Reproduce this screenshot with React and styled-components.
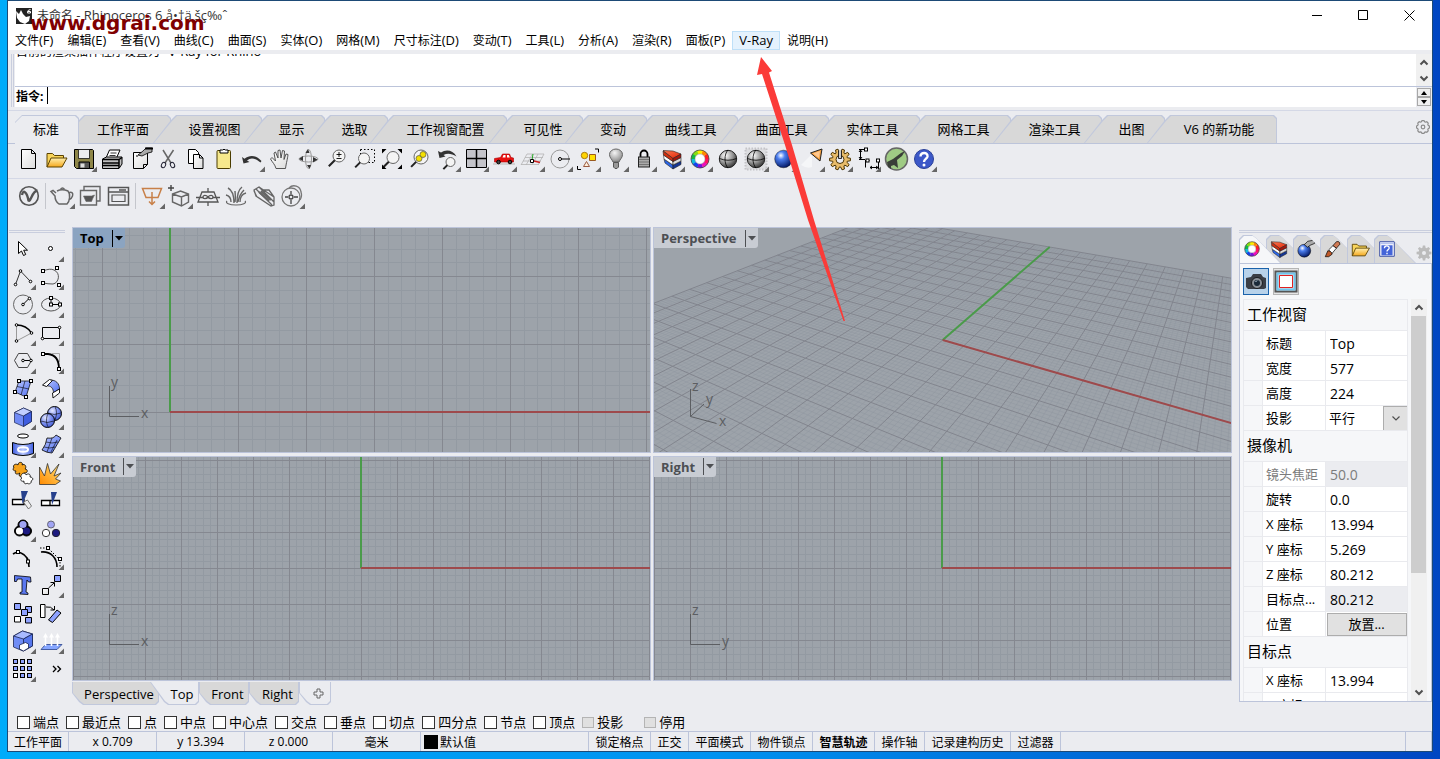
import styled, { createGlobalStyle, css } from "styled-components";

const GlobalStyle = createGlobalStyle`
	* {
		box-sizing: border-box;
	}

	body {
		margin: 0;
		font-family: "Open Sans", "Noto Sans CJK SC", sans-serif;
		font-size: 13px;
		color: #000000;
	}

	button,
	input,
	select {
		font: inherit;
		color: inherit;
	}

	button {
		padding: 0;
		border: 0;
		background: none;
	}
`;

const Desktop = styled.div`
	position: relative;
	height: 100vh;
	min-height: 700px;
	padding: 0 7px 7px;
	overflow: hidden;
	background: linear-gradient(90deg, #00acfa 0%, #0092f0 50%, #0046c2 100%);
`;

const Window = styled.div`
	display: flex;
	flex-direction: column;
	height: 100%;
	border: 1px solid #1d4a76;
	background-color: #ebecf0;
`;

const Latin = styled.span`
	font-size: 13px;
`;

const TitleBar = styled.header`
	position: relative;
	display: flex;
	align-items: center;
	gap: 5px;
	height: 29px;
	padding-left: 8px;
	font-size: 12px;
	line-height: 16px;
	color: #333333;
	background-color: #ffffff;
`;

const WindowButtons = styled.div`
	display: flex;
	margin-left: auto;

	button {
		width: 46px;
		height: 28px;
	}

	svg {
		display: block;
		margin: auto;
	}
`;

const Watermark = styled.strong`
	position: absolute;
	top: 10px;
	left: 22px;
	font-family: "DejaVu Sans", sans-serif;
	font-size: 20px;
	line-height: 24px;
	color: #800000;
`;

const MenuBar = styled.nav`
	display: flex;
	height: 20px;
	background-color: #ffffff;
`;

const MenuItem = styled.button`
	height: 19px;
	margin-top: 1px;
	padding: 0 6px;
	font-size: 12px;
	line-height: 17px;
	white-space: nowrap;
	border: 1px solid transparent;

	${(p) =>
		p.$hot &&
		css`
			border-color: #bfe0f8;
			background-color: #e5f2fd;
		`}
`;

const CommandArea = styled.section`
	display: grid;
	grid-template-columns: 1fr 16px;
	grid-template-rows: 32px 21px;
	margin: 4px 0 3px 3px;
	padding-left: 3px;
	border-left: 1px solid #c9cede;
	background: linear-gradient(90deg, #ebecf0 1px, #c9cede 1px, #c9cede 2px, #ebecf0 2px) no-repeat 0 0 / 3px 100%;
	padding-left: 3px;
`;

const History = styled.div`
	display: flex;
	align-items: flex-start;
	overflow: hidden;
	padding-left: 1px;
	background-color: #ffffff;
	font-size: 12px;

	p {
		margin: -11px 0 0;
		line-height: 16px;
	}
`;

const HistoryScroll = styled.div`
	display: flex;
	flex-direction: column;
	justify-content: space-around;
	align-items: center;
	background-color: #f0f0f0;

	button {
		width: 16px;
		height: 12px;
	}

	svg {
		display: block;
		margin: auto;
	}
`;

const Prompt = styled.div`
	display: flex;
	align-items: center;
	padding: 0 0 3px 1px;
	border-top: 1px solid #bcc4da;
	background-color: #ffffff;
	font-size: 12px;

	label {
		font-weight: 700;
	}

	input {
		flex: 1;
		height: 16px;
		border: 0;
		outline: 0;
		background: none;
	}
`;

const Caret = styled.span`
	width: 1px;
	height: 17px;
	margin-left: 4px;
	background-color: #000000;
`;

const Spinner = styled.div`
	display: flex;
	flex-direction: column;
	padding: 1px;
	border-top: 1px solid #bcc4da;

	button {
		flex: 1;
		width: 14px;
		line-height: 0;
		border: 1px solid #a8a8a8;
		background-color: #f0f0f0;
	}

	svg {
		display: block;
		margin: auto;
	}
`;

const TabStrip = styled.div`
	display: flex;
	height: 34px;
	padding: 4px 0 0 7px;
	border-top: 1px solid #d4d8e6;
	border-bottom: 1px solid #bcc4da;
`;

const slantedTab = "polygon(0 100%, 18px 5px, 23px 0, calc(100% - 3px) 0, 100% 3px, 100% 100%)";
const firstTab = "polygon(0 7px, 7px 0, calc(100% - 3px) 0, 100% 3px, 100% 100%, 0 100%)";

const ToolTab = styled.button`
	position: relative;
	z-index: 0;
	flex: none;
	width: ${(p) => p.$width + 18}px;
	height: 28px;
	margin-left: -18px;
	padding-left: 14px;
	line-height: 25px;
	background-color: #c1c8dc;
	clip-path: ${slantedTab};

	&::before {
		content: "";
		position: absolute;
		inset: 1px 1px 0 1px;
		z-index: -1;
		background-color: #d8d8d8;
		clip-path: ${slantedTab};
	}

	${(p) =>
		p.$active &&
		css`
			z-index: 1;
			width: 64px;
			height: 29px;
			margin: 0;
			padding: 0 2px 0 0;
			clip-path: ${firstTab};

			&::before {
				inset: 1px 1px 0 0;
				background-color: #ebecf0;
				clip-path: ${firstTab};
			}
		`}
`;

const StripOptions = styled.button`
	margin-left: auto;
	width: 16px;
	height: 24px;

	svg {
		display: block;
	}
`;

const ToolBar = styled.div`
	display: flex;
	align-items: flex-start;
	height: ${(p) => p.$height}px;
	padding: ${(p) => (p.$line ? 1 : 3)}px 6px 0;
	border-bottom: ${(p) => (p.$line ? "1px solid #d4d8e6" : "0")};
`;

const ToolButton = styled.button`
	width: 28px;
	height: 28px;
	flex: none;

	svg {
		display: block;
	}
`;

const Divider = styled.span`
	width: 1px;
	height: 26px;
	margin: 1px 2px 0 3px;
	background-color: #c4c6cc;
`;

const Main = styled.main`
	display: flex;
	flex: 1;
	min-height: 0;
`;

const SideTools = styled.aside`
	display: grid;
	grid-template-columns: 28px 28px;
	grid-auto-rows: 28px;
	align-content: start;
	flex: none;
	width: 56px;
	margin: 3px 7px 0 1px;
	padding-top: 2px;
	border-top: 3px double #c9cede;
`;

const Center = styled.section`
	display: flex;
	flex-direction: column;
	flex: 1;
	min-width: 0;
`;

const ViewportGrid = styled.div`
	display: grid;
	grid-template-columns: 1fr 1fr;
	grid-template-rows: 1fr 1fr;
	gap: 3px 2px;
	flex: 1;
	min-height: 0;
`;

const ViewportFrame = styled.div`
	position: relative;
	min-width: 0;
	min-height: 0;
	overflow: hidden;
	border: 1px solid #bcc4da;
	background-color: #9da3aa;

	> svg {
		position: absolute;
		left: 0;
		width: 100%;
		height: 100%;
	}
`;

const ViewportLabel = styled.button`
	position: absolute;
	top: 0;
	left: 0;
	display: flex;
	align-items: center;
	height: 20px;
	padding-left: 7px;
	font-weight: 700;
	line-height: 20px;
	color: ${(p) => (p.$active ? "#000000" : "#4d4f53")};
	background-color: ${(p) => (p.$active ? "#8ba4c1" : "#c8ccd3")};
	border-bottom-right-radius: 3px;

	span {
		width: 1px;
		height: 17px;
		margin-left: 8px;
		background-color: currentColor;
	}

	svg {
		margin: 0 2px;
	}
`;

const Gizmo = styled.svg`
	&& {
		top: auto;
		bottom: 24px;
		left: 28px;
		width: 60px;
		height: 60px;
		font-size: 14px;
		overflow: visible;
	}
`;

const ViewTabs = styled.div`
	display: flex;
	height: 23px;
	margin: 1px 0 3px;
`;

const viewTab =
	"polygon(0 0, 100% 0, 100% calc(100% - 3px), calc(100% - 3px) 100%, 11px 100%, 7px calc(100% - 3px), 0 11px)";
const currentViewTab =
	"polygon(0 0, 100% 0, 100% calc(100% - 3px), calc(100% - 3px) 100%, 18px 100%, 14px calc(100% - 3px))";

const ViewTab = styled.button`
	position: relative;
	z-index: 0;
	height: 23px;
	width: ${(p) => p.$width}px;
	margin-left: ${(p) => (p.$current ? -9 : 0)}px;
	padding-left: ${(p) => (p.$current ? 15 : 7)}px;
	line-height: 22px;
	background-color: #c1c8dc;
	clip-path: ${(p) => (p.$current ? currentViewTab : viewTab)};

	&::before {
		content: "";
		position: absolute;
		inset: 0 1px 1px 1px;
		z-index: -1;
		background-color: ${(p) => (p.$gray ? "#d8d8d8" : "#ebecf0")};
		clip-path: ${(p) => (p.$current ? currentViewTab : viewTab)};
	}

	svg {
		display: block;
		margin: auto;
	}
`;

const Panel = styled.aside`
	display: flex;
	flex-direction: column;
	flex: none;
	width: 193px;
	margin: 3px 0 6px 7px;
	border-top: 3px double #c9cede;
`;

const PanelTabs = styled.div`
	display: flex;
	align-items: flex-end;
	height: 30px;
`;

const panelTab = "polygon(0 4px, 4px 0, 13px 0, 17px 3px, 100% 100%, 0 100%)";

const PanelTab = styled.button`
	position: relative;
	z-index: ${(p) => (p.$active ? 1 : 0)};
	width: 42px;
	height: 28px;
	margin-right: -15px;
	background-color: #c1c8dc;
	clip-path: ${panelTab};

	&::before {
		content: "";
		position: absolute;
		inset: 1px 1px 0 1px;
		z-index: -1;
		background-color: ${(p) => (p.$active ? "#f6f7f9" : "#d8d8d8")};
		clip-path: ${panelTab};
	}

	svg {
		display: block;
		margin-left: 1px;
	}
`;

const PanelOptions = styled.button`
	width: 16px;
	height: 18px;
	margin-left: auto;
`;

const PanelBody = styled.div`
	display: flex;
	flex-direction: column;
	flex: 1;
	min-height: 0;
	padding: 4px 4px 0 3px;
	border: 1px solid #bcc4da;
	background-color: #f6f7f9;
`;

const PageButtons = styled.div`
	display: flex;
	gap: 4px;
	margin-bottom: 4px;
`;

const PageButton = styled.button`
	width: 26px;
	height: 27px;
	border: 1px solid ${(p) => (p.$active ? "#1a62ab" : "#b5b5b5")};
	background-color: ${(p) => (p.$active ? "#b8d2ea" : "#e5e5e5")};

	svg {
		display: block;
	}
`;

const PropsScroll = styled.div`
	display: flex;
	flex: 1;
	min-height: 0;
	overflow: hidden;
`;

const PropTable = styled.table`
	width: 165px;
	border-collapse: collapse;
	table-layout: fixed;
	align-self: flex-start;

	col:nth-child(1) {
		width: 19px;
	}

	col:nth-child(2) {
		width: 63px;
	}

	td,
	th {
		height: 25px;
		padding: 0;
		border: 1px solid #e9eaee;
		font-weight: 400;
		text-align: left;
		line-height: 20px;
		white-space: nowrap;
	}

	th[scope="rowgroup"] {
		height: 31px;
		padding: 0 0 2px 3px;
		font-size: 15px;
		background-color: #f6f7f9;
	}

	th[scope="row"] {
		padding-left: 3px;
		background-color: #ffffff;
	}
`;

const ValueCell = styled.td`
	background-color: ${(p) => (p.$gray ? "#ebecf0" : "#ffffff")};

	input {
		display: block;
		width: 100%;
		height: 24px;
		padding: 0 4px;
		border: 0;
		background: none;
		font-size: 14px;
	}

	button {
		display: block;
		width: 80px;
		height: 23px;
		margin: auto;
		border: 1px solid #adadad;
		background-color: #e1e1e1;
	}
`;

const Dim = styled.span`
	color: #7c7c7c;
`;

const SelectBox = styled.div`
	display: flex;

	select {
		flex: 1;
		min-width: 0;
		height: 24px;
		padding: 0 3px;
		border: 0;
		background: none;
		appearance: none;
	}

	span {
		display: grid;
		place-items: center;
		width: 24px;
		height: 24px;
		border-left: 1px solid #adadad;
		border-top: 1px solid #adadad;
		background-color: #e1e1e1;
	}
`;

const ScrollBar = styled.div`
	display: flex;
	flex-direction: column;
	width: 16px;
	margin-left: auto;
	background-color: #f0f0f0;

	button {
		height: 17px;
	}

	span {
		flex: 0 1 257px;
		width: 15px;
		background-color: #cdcdcd;
	}

	button:last-child {
		margin-top: auto;
	}

	svg {
		display: block;
		margin: auto;
	}
`;

const SnapBar = styled.div`
	display: flex;
	align-items: center;
	height: 23px;
	padding: 5px 0 0 9px;
`;

const Snap = styled.label`
	display: flex;
	align-items: center;
	gap: 3px;
	margin-right: ${(p) => (p.$off ? 21 : 7)}px;
	line-height: 18px;

	input {
		appearance: none;
		width: 13px;
		height: 13px;
		margin: 0;
		border: 1px solid #333333;
		background-color: #ffffff;
	}

	input:disabled {
		width: 12px;
		height: 11px;
		border-color: #b4b4b4;
		background-color: #e0e0e0;
	}
`;

const StatusBar = styled.footer`
	display: flex;
	height: 20px;
	border-top: 1px solid #bcc4da;
	font-size: 12px;
`;

const StatusCell = styled.button`
	display: flex;
	align-items: center;
	justify-content: ${(p) => (p.$left ? "flex-start" : "center")};
	flex: ${(p) => (p.$grow ? "1 1 auto" : "none")};
	width: ${(p) => p.$width}px;
	padding-left: ${(p) => (p.$left ? 3 : 0)}px;
	border-right: 1px solid #bcc4da;
	font-weight: ${(p) => (p.$bold ? 700 : 400)};
	white-space: nowrap;

	i {
		width: 14px;
		height: 14px;
		margin-right: 2px;
		background-color: #000000;
	}
`;

const Pointer = styled.svg`
	position: absolute;
	top: 56px;
	left: 756px;
	pointer-events: none;
`;

const HiddenSvg = styled.svg`
	position: absolute;
`;

const SharedPaints = () => (
	<HiddenSvg width="0" height="0" aria-hidden="true">
		<defs>
			<radialGradient id="steel" cx=".35" cy=".3" r=".8">
				<stop offset="0" stopColor="#fff" />
				<stop offset=".5" stopColor="#999" />
				<stop offset="1" stopColor="#222" />
			</radialGradient>
			<radialGradient id="bulb" cx=".4" cy=".3" r=".8">
				<stop offset="0" stopColor="#f4f4f4" />
				<stop offset="1" stopColor="#7c7c7c" />
			</radialGradient>
			<radialGradient id="blueball" cx=".35" cy=".3" r=".75">
				<stop offset="0" stopColor="#fff" />
				<stop offset=".3" stopColor="#4c7ff0" />
				<stop offset="1" stopColor="#00145e" />
			</radialGradient>
			<radialGradient id="softball" cx=".35" cy=".3" r=".8">
				<stop offset="0" stopColor="#e4e8ff" />
				<stop offset=".5" stopColor="#7c90f2" />
				<stop offset="1" stopColor="#3c55cc" />
			</radialGradient>
			<linearGradient id="face" x1="0" y1="0" x2="1" y2="1">
				<stop offset="0" stopColor="#bcc8ff" />
				<stop offset="1" stopColor="#4f6ff0" />
			</linearGradient>
			<linearGradient id="strip" x1="0" y1="0" x2="1" y2="0">
				<stop offset="0" stopColor="#3f5ee0" />
				<stop offset=".5" stopColor="#b8c8ff" />
				<stop offset="1" stopColor="#3f5ee0" />
			</linearGradient>
			<linearGradient id="folder" x1="0" y1="0" x2="0" y2="1">
				<stop offset="0" stopColor="#fff0b0" />
				<stop offset="1" stopColor="#f5a81c" />
			</linearGradient>
			<linearGradient id="paper" x1="0" y1="0" x2="1" y2="1">
				<stop offset="0" stopColor="#fff" />
				<stop offset="1" stopColor="#dcdcdc" />
			</linearGradient>
			<linearGradient id="layer" x1="0" y1="0" x2="1" y2="1">
				<stop offset="0" stopColor="#ff7a50" />
				<stop offset="1" stopColor="#e02408" />
			</linearGradient>
			<linearGradient id="boom" x1="1" y1="0" x2="0" y2="1">
				<stop offset="0" stopColor="#ffe27a" />
				<stop offset="1" stopColor="#ff8a00" />
			</linearGradient>
		</defs>
	</HiddenSvg>
);

const Icon = ({ flag, children, size = 28 }) => (
	<svg width={size} height={size} viewBox="0 0 28 28" fill="none" stroke="#000" strokeWidth="1">
		{children}
		{flag && <path d="M27 21.5V27h-5.5z" fill="#666" stroke="none" />}
	</svg>
);

// small square / round control points used by the drawing tools
const Sq = ({ at }) =>
	at.map(([x, y]) => <rect key={`${x}-${y}`} x={x - 1.5} y={y - 1.5} width="3" height="3" fill="#fff" />);
const Pt = ({ at }) => at.map(([x, y]) => <circle key={`${x}-${y}`} cx={x} cy={y} r="1.3" fill="#fff" />);

const wheel = ["#f22", "#f80", "#fe0", "#8d1", "#1b4", "#1bd", "#14e", "#71d", "#e1b", "#f16"];
const Wheel = ({ r = 7 }) => (
	<g strokeWidth="4">
		{wheel.map((color, i) => {
			const a = (i * 36 * Math.PI) / 180;
			const b = ((i * 36 + 38) * Math.PI) / 180;
			return (
				<path
					key={color}
					stroke={color}
					d={`M${14 + r * Math.cos(a)} ${14 - r * Math.sin(a)}A${r} ${r} 0 0 0 ${14 + r * Math.cos(b)} ${14 - r * Math.sin(b)}`}
				/>
			);
		})}
		<circle cx="14" cy="14" r={r + 2} stroke="#444" strokeWidth=".8" />
		<circle cx="14" cy="14" r={r - 2} fill="#fff" stroke="#888" strokeWidth=".5" />
	</g>
);

const Layers = () => (
	<g strokeWidth=".6" stroke="#222">
		<path d="M6 14l9 6v4L7 18z" fill="#2b66e8" />
		<path d="M15 20l8-4v3.500L15 24z" fill="#153694" />
		<path d="M5.500 10l9.500 6.500V20L6 14z" fill="#fff" />
		<path d="M15 16.500l8-4V16l-8 4z" fill="#ddd" />
		<path d="M5 6l10 7v3.500L5.500 10z" fill="#d03010" />
		<path d="M5 5.500l10 .5 8 3-8 4.500z" fill="url(#layer)" />
		<path d="M15 13.500L23 9v3.500l-8 4z" fill="#a6170d" />
	</g>
);

const Lens = ({ x, y, r = 5.5, dx = -6 }) => (
	<>
		<circle cx={x} cy={y} r={r} fill="#f4f4f4" stroke="#666" />
		<path d={`M${x - r * 0.7} ${y + r * 0.7}l${dx} ${-dx}`} strokeWidth="2" stroke="#222" />
	</>
);

const Folder = () => (
	<g stroke="#5a4200">
		<path d="M5 22V8.500h5.500l2 2h9V13" fill="#f8d45a" />
		<path d="M5 22l4-9h16l-5 9z" fill="url(#folder)" />
	</g>
);

const gearPath = (cx, cy, r1, r2, n) => {
	let d = "";
	for (let i = 0; i < n; i++) {
		[
			[r1, -0.5],
			[r2, -0.26],
			[r2, 0.26],
			[r1, 0.5],
		].forEach(([r, k], j) => {
			const a = ((i + k * 0.75) * 2 * Math.PI) / n;
			d += `${i || j ? "L" : "M"}${(cx + r * Math.cos(a)).toFixed(2)} ${(cy + r * Math.sin(a)).toFixed(2)}`;
		});
	}
	return d + "z";
};

const ShadedBall = () => (
	<>
		<circle cx="14" cy="14" r="8.700" fill="url(#steel)" stroke="#222" />
		<path d="M14 5c-4 4-4 14 0 18M5.500 13.500q8.500 3.500 17 0" strokeWidth=".8" />
	</>
);

// name, has a flyout, drawing
const mainTools = [
	["新建", 0, <path d="M7.500 4.500h10l4 4v15h-14zM17.500 4.500v4h4" fill="url(#paper)" />],
	["打开", 0, <Folder />],
	[
		"保存",
		1,
		<>
			<path d="M4.500 4.500h18l1 1v18h-17l-2-2z" fill="#8e8648" />
			<path d="M8.500 4.500h11v9h-11z" fill="#eee" strokeWidth=".7" />
			<path d="M9 17h10.500v6.500H9z" fill="#555" />
			<path d="M10.500 18.500h4v4h-4z" fill="#ddd" stroke="none" />
		</>,
	],
	[
		"打印",
		0,
		<>
			<path d="M8 13l3.500-8H22l-3.500 8z" fill="#fff" />
			<path d="M12.500 8h6M11.500 10.500h6" strokeWidth=".8" />
			<path d="M4.500 14l4-2H24v7l-3 4.500H4.500z" fill="#c0c0c0" />
			<path d="M4.500 14.500H21l3-2M21 14v9M4.500 18H21M4.500 20.500H21" strokeWidth="1.500" />
		</>,
	],
	[
		"文件属性",
		0,
		<>
			<path d="M7.500 7.500h14v12l-4 4h-10zM17.500 23.500v-4h4" fill="url(#paper)" />
			<path d="M10 11h2" />
			<path d="M12 10l5-4 3-3h6v4l-4 1-6 3z" fill="#aaa" strokeWidth=".8" />
			<path d="M19 3.500h8" strokeWidth="2" />
		</>,
	],
	[
		"剪切",
		0,
		<>
			<path d="M9 5l8 13M19.500 5L11 18" stroke="#666" strokeWidth="1.500" />
			<ellipse cx="9.500" cy="20" rx="2" ry="2.800" stroke="#223" transform="rotate(25 9.500 20)" />
			<ellipse cx="18.500" cy="20" rx="2" ry="2.800" stroke="#223" transform="rotate(-25 18.500 20)" />
		</>,
	],
	[
		"复制",
		0,
		<>
			<path d="M6.500 4.500h7l3 3v11h-10z" fill="#fff" />
			<path d="M11.500 9.500h6l3.500 3.500v10.500h-9.500zM17.500 9.500v3.500H21" fill="url(#paper)" />
		</>,
	],
	[
		"粘贴",
		0,
		<>
			<rect x="7" y="5.500" width="13.500" height="18" rx="1" fill="#f6e88c" stroke="#4a3c00" />
			<path d="M10 8V5h2.500q1.500-1.500 3 0H18v3z" fill="#fff" />
		</>,
	],
	["撤销", 1, <path d="M4 12l1.500 6.500 6-1.500-2.500-1.500c4-3.500 8-2.500 13.500 2l1-1.500C18 10 12 9.500 6.500 13.700z" fill="#333" stroke="none" />],
	[
		"平移",
		0,
		<path
			d="M10 23.500c-1-4-3.500-6-5.500-9.500l1.500-1.500L9.500 16 8 8l1.500-1 2.500 6V5.500l2-.5 1 8 1.500-7.500 2 .5-.5 8.500L20 9l2 .5c-.5 5-1.500 7-2.500 14z"
			fill="url(#paper)"
			stroke="#444"
			strokeWidth=".9"
		/>,
	],
	[
		"旋转视图",
		0,
		<g stroke="#999">
			<ellipse cx="14.500" cy="14" rx="9.500" ry="3" />
			<ellipse cx="14.500" cy="14" rx="3" ry="9.500" />
			<path d="M9 11l-4 3 4 2zM19 12l4.500 2.500-4.500 3zM14 4l-2.500 4h4zM15.500 24L13 20h4z" fill="#333" stroke="none" />
		</g>,
	],
	[
		"缩放",
		0,
		<>
			<Lens x={17} y={11} r={6} />
			<path d="M14.500 9.500h5M17 7v5M14.500 13.500h5" strokeWidth=".9" />
		</>,
	],
	[
		"框选缩放",
		0,
		<>
			<path d="M10.500 4.500h14v13h-14z" strokeDasharray="1.500 2" />
			<Lens x={14} y={13.5} r={5.5} dx={-5} />
		</>,
	],
	[
		"缩放至范围",
		0,
		<>
			<Lens x={15} y={12.5} r={6} dx={-5} />
			<path d="M4 8.500V4h4.500zM24 8.500V4h-4.500zM24 19.500V24h-4.500zM4 19.500V24h4.500z" fill="#000" stroke="none" />
		</>,
	],
	[
		"缩放至选取",
		0,
		<>
			<Lens x={15} y={12} r={7} dx={-5} />
			<circle cx="13" cy="13.500" r="3" fill="#f4e000" stroke="#554" strokeWidth=".7" />
			<circle cx="17" cy="9.500" r="3" fill="#f4e000" stroke="#554" strokeWidth=".7" />
		</>,
	],
	[
		"复原视图",
		1,
		<>
			<Lens x={16.5} y={17} r={4.5} dx={-4} />
			<path d="M4 6l1.500 7 6-1.500-2-1.500c4-2 8-1.500 13 1.500C19 5 12 4 7 7.500z" fill="#333" stroke="none" />
		</>,
	],
	[
		"四视图",
		1,
		<>
			<path d="M4.500 4.500h20v18h-20z" fill="#c4c4ca" />
			<path d="M14.500 4.500v18M4.500 13.500h20" strokeWidth="1.500" />
		</>,
	],
	[
		"右视图",
		1,
		<>
			<path d="M3 19h22" stroke="#c9c9c9" strokeWidth="1.500" />
			<path d="M4.500 13.500l6-1 2-3.500h7l1.500 3.500 2.500.5v4h-19z" fill="#e81010" stroke="#a00" strokeWidth=".6" />
			<path d="M13.500 10h2v2.500h-3zM17 10h1.800l1 2.500H17z" fill="#fff" stroke="none" />
			<circle cx="8.500" cy="17" r="1.800" fill="#444" />
			<circle cx="20" cy="17" r="1.800" fill="#444" />
		</>,
	],
	[
		"工作平面",
		1,
		<>
			<path d="M9 9h17M7 12.500h18M5 16h18M3 19.500h18M9 9L3 20M14.500 9L8 20M20 9l-6 11M26 9l-6 11" stroke="#b4b4b4" strokeWidth=".8" />
			<path d="M14 15l1-6" stroke="#2a2" />
			<path d="M14 15.500l8 2" stroke="#c22" strokeWidth="1.500" />
			<path d="M12.500 14.500h3v3h-3z" fill="#fff" />
		</>,
	],
	[
		"设置视图",
		1,
		<>
			<circle cx="14" cy="14" r="9" stroke="#999" />
			<path d="M14 14h10" />
			<circle cx="14" cy="14" r="1.500" fill="#fff" />
		</>,
	],
	[
		"选取物件",
		1,
		<>
			<path d="M21 4h3.500v3.500M3.500 21v3.500H7" />
			<circle cx="10.500" cy="10.500" r="3.200" fill="#ffd400" stroke="#a87a10" />
			<path d="M15.500 9.500h6v6h-6z" fill="#ffe000" stroke="#9a5a20" />
			<path d="M12.500 16.500l3 5h-6z" fill="#fff0dc" stroke="#9a5a40" />
		</>,
	],
	[
		"隐藏",
		1,
		<>
			<path d="M11 17c-1-3-3.500-4-3.500-7.500a6.500 5.500 0 0113 0c0 3.500-2.500 4.500-3.500 7.500z" fill="url(#bulb)" stroke="#666" />
			<path d="M11.500 17.500h5v4.500l-1.500 1.500h-2L11.500 22z" fill="#999" stroke="#555" />
		</>,
	],
	[
		"锁定",
		1,
		<>
			<path d="M10.500 12V9a3.500 3.500 0 017 0v3" strokeWidth="1.800" />
			<rect x="8.500" y="12" width="11" height="10" fill="#aaa" stroke="#222" />
			<path d="M9 14.500h10M9 17h10M9 19.500h10" stroke="#666" strokeWidth=".8" />
		</>,
	],
	["图层", 1, <Layers />],
	["颜色", 1, <Wheel />],
	["着色", 0, <ShadedBall />],
	[
		"渲染模式",
		1,
		<>
			<path d="M3.500 3.500h21v21h-21z" fill="#dcdde0" stroke="#c4c4c8" strokeWidth="2" strokeDasharray="1.500 1.500" />
			<ShadedBall />
		</>,
	],
	["渲染", 1, <circle cx="13.500" cy="14" r="8.800" fill="url(#blueball)" strokeWidth=".4" />],
	[
		"灯光",
		1,
		<>
			<path d="M14 9L3 20q6 4 11 2z" fill="#fff" stroke="none" opacity=".5" />
			<path d="M12.500 8L24 4l-2 12z" fill="#f5a040" stroke="#222" />
			<path d="M15 8.500L22 6l-1 7z" fill="#ffc890" stroke="none" />
		</>,
	],
	[
		"选项",
		1,
		<>
			<path d={gearPath(14, 14.5, 7.5, 10.5, 10)} fill="#e8bc6a" stroke="#4a3400" />
			<circle cx="14" cy="14.500" r="4" fill="#ebecf0" stroke="#4a3400" />
			<path d="M12.500 5.500v8h3v-8" fill="#ccc" strokeWidth=".8" />
		</>,
	],
	[
		"尺寸标注",
		1,
		<>
			<path d="M5 4.500h5M5 14.500h6M6.500 5v9M11.500 15v7.500M24.500 15v9M11.500 15.500h4M16 22.500h8M5 7l1.500-2L8 7M5 12l1.500 2L8 12M18 21l-2 1.500 2 1.500M22 21l2 1.500-2 1.500" />
			<Sq at={[[12, 4.5], [13.5, 15.5], [24, 15.5]]} />
		</>,
	],
	[
		"Grasshopper",
		0,
		<>
			<circle cx="14.500" cy="14" r="11" fill="#9fcb84" stroke="#666" strokeWidth="1.500" />
			<path d="M6 22l-1-5 6-3 8-6 4-2-3 5-5 4 1 8-4-3-3 1v3z" fill="#3a3f38" stroke="none" />
		</>,
	],
	[
		"帮助",
		1,
		<>
			<circle cx="14" cy="14" r="9.500" fill="#3c58c8" stroke="#2a4098" />
			<path d="M10.500 11.500c0-5 7.500-4.500 7 0-.5 2.500-3.500 2.500-3.500 5.500" stroke="#fff" strokeWidth="2.400" />
			<circle cx="14" cy="20" r="1.500" fill="#fff" stroke="none" />
		</>,
	],
];

const vrayTools = [
	[
		"V-Ray",
		0,
		<g stroke="#555">
			<circle cx="15" cy="14" r="9.300" strokeWidth="1.600" />
			<path d="M8 13c1-6 5-3 6.500 5.500C17 20 18 9 23.500 8.500" strokeWidth="2.400" />
		</g>,
	],
	null,
	[
		"渲染",
		1,
		<g stroke="#666" strokeWidth="1.500">
			<path d="M9 9q5-2.500 11 0c2.500 3 2 10-1 13h-8c-3-2-4-5-4-8L3 9.500l2-1 3 2.500M20.500 11c3-2 5 0 4 3s-2 3-4 4" />
			<path d="M12.500 7.500q2-3 4 0" />
		</g>,
	],
	[
		"交互式渲染",
		0,
		<g stroke="#666" strokeWidth="1.400">
			<path d="M8 8V4.500h16V19h-3" />
			<path d="M4.500 8.500h16V23h-16z" />
			<path d="M9.500 14h6l3-1-2 4-1 2.500H10L7.500 14z" fill="#555" strokeWidth=".6" />
		</g>,
	],
	[
		"帧缓存",
		0,
		<g stroke="#555" strokeWidth="1.500">
			<path d="M4.500 5.500h20V23h-20zM4.500 10h20" />
			<path d="M8 13h13v6.500H8z" strokeWidth="1.200" />
			<path d="M15 8h7" />
		</g>,
	],
	null,
	[
		"矩形灯",
		1,
		<g stroke="#c88048" strokeWidth="1.500">
			<path d="M4.500 6.500h19l-3.500 9H8z" />
			<path d="M14 10v12M11 19.500l3 3 3-3" />
		</g>,
	],
	[
		"代理",
		1,
		<g stroke="#666" strokeWidth="1.400">
			<path d="M6.500 12l8-3 8 3v8l-7 4-9-4zM6.500 12l9 3 7-3M15.500 15v9" />
			<path d="M5 3v6M2 6h6" stroke="#444" />
		</g>,
	],
	[
		"无限平面",
		0,
		<g stroke="#555" strokeWidth="1.300">
			<path d="M8 10h12l4 10H4zM2 15.500h24M14 6v4M14 20v4" />
			<path d="M14 15c-2-2.500-5-2-5 0s3 2.500 5 0 5-2 5 0-3 2.500-5 0" fill="#ebecf0" />
		</g>,
	],
	[
		"毛发",
		0,
		<g stroke="#666" strokeWidth="1.400">
			<path d="M12 21C12 12 10 8 6 6M15 21c0-8 1-13 5-16M9 20c0-4-1-6-5-7M18 20c0-5 2-8 6-9M13 20c1-6 0-8 0-11M16 20c1-6 3-9 6-12" />
			<path d="M5 19c-2 2 2 4 9 4s11-2 9-4" strokeWidth="1.200" />
		</g>,
	],
	[
		"裁切",
		0,
		<g stroke="#666" strokeWidth="1.300">
			<path d="M4 8l5-3 15 10v8l-3 1L6 14zM6 7l16 16M9 5l15 15M4 9l3 6M13 8h6l5 7" />
			<path d="M9 10l10 9M11 9l10 9" strokeWidth="2" />
		</g>,
	],
	[
		"场景",
		1,
		<g stroke="#777" strokeWidth="1.300">
			<circle cx="13" cy="15" r="9" />
			<path d="M11 6a7 7 0 0112 4c1 3 1 5-1 8" />
			<circle cx="13" cy="15" r="2" stroke="#444" />
			<path d="M13 9v3M13 18v4M7 15h3M16 15h4" stroke="#444" />
		</g>,
	],
];

const Cube = () => (
	<g strokeWidth=".7" stroke="#1a2450">
		<path d="M5.500 9.500l9-4.500 8 3.500v10l-8 5-9-4z" fill="#6f8af5" />
		<path d="M5.500 9.500l9-4.500 8 3.500-8 4.500z" fill="#c0ceff" />
		<path d="M14.500 13v10.500l8-5v-10z" fill="#3f5ee0" />
	</g>
);

const sideTools = [
	["选取", 0, <path d="M9.500 6.500v12l3-2.500 2 4.500 2.200-1-2-4.300h3.800z" fill="#fff" />],
	["点", 1, <circle cx="13.500" cy="13.500" r="2" fill="#fff" />],
	[
		"多重直线",
		1,
		<>
			<path d="M6.500 21.500L11.500 8l10 10.500" stroke="#333" />
			<Pt at={[[6.5, 21.5], [11.5, 8], [21.5, 18.5]]} />
		</>,
	],
	[
		"曲线",
		1,
		<>
			<path d="M6 8q7-3 11-1c7 3 5 13-1 14q-5 0-10-1" stroke="#555" />
			<Sq at={[[6, 8], [20, 5], [6, 20], [22, 22]]} />
		</>,
	],
	[
		"圆",
		1,
		<>
			<circle cx="14" cy="13.500" r="9.500" stroke="#666" />
			<path d="M14 13.500l6-6" />
			<Pt at={[[14, 13.5], [20.5, 7.5]]} />
		</>,
	],
	[
		"椭圆",
		1,
		<>
			<ellipse cx="14" cy="13.500" rx="9.500" ry="6.500" stroke="#555" />
			<path d="M14 7v6.500h9" />
			<Sq at={[[14, 7], [14, 13.5], [23, 13.5]]} />
		</>,
	],
	[
		"圆弧",
		1,
		<>
			<path d="M7.500 6v16l15-8" stroke="#999" />
			<path d="M7.500 6q10 0 15 8" strokeWidth="1.400" />
			<Pt at={[[7.5, 6], [22.5, 14], [7.5, 22]]} />
		</>,
	],
	[
		"矩形",
		1,
		<>
			<path d="M5.500 8.500h17v11h-17z" />
			<Pt at={[[22.5, 8.5], [5.5, 19.5]]} />
		</>,
	],
	[
		"多边形",
		1,
		<>
			<path d="M5.500 13.500l4-7h9l4 7-4 7h-9z" stroke="#444" />
			<path d="M14 13.500h8" />
			<Pt at={[[14, 13.5], [22, 13.5]]} />
		</>,
	],
	[
		"圆角",
		1,
		<>
			<path d="M15 6.500h7.500V15" stroke="#aaa" />
			<path d="M6 7h5q11 1 11 15" strokeWidth="1.800" />
			<Sq at={[[6, 7], [22, 22]]} />
		</>,
	],
	[
		"曲面",
		1,
		<>
			<path d="M10 6h12l-5 16-11-5z" fill="url(#face)" strokeWidth=".7" />
			<path d="M8 11.500l12 2.500M16 6l-4 14" strokeWidth=".6" />
			<Sq at={[[10, 6], [22, 6], [6, 17], [17, 22]]} />
		</>,
	],
	[
		"放样",
		1,
		<>
			<path d="M8.500 11c6-1 8 3 8 7l6-4c0-6-4-9-9-9z" fill="url(#face)" strokeWidth=".7" />
			<path d="M5.500 10l7-5.500 3 1-6 6zM15.500 18l7-4v4l-6.500 5z" fill="#fff" strokeWidth=".9" />
		</>,
	],
	["立方体", 1, <Cube />],
	[
		"布尔运算",
		1,
		<>
			<circle cx="17.500" cy="10.500" r="7" fill="url(#softball)" />
			<circle cx="10.500" cy="17.500" r="7" fill="url(#softball)" />
			<path d="M4 18q6 3 13 0M11 11c-2 3-2 9 0 13M18 4q3 5 0 13M11 10q6 3 13 0" strokeWidth=".6" />
		</>,
	],
	[
		"投影曲线",
		1,
		<>
			<ellipse cx="14" cy="5" rx="5.500" ry="2" fill="#fff" />
			<path d="M3.500 11.500q10.500 4 21 0v11q-10.500 4-21 0z" fill="url(#strip)" />
			<ellipse cx="14" cy="18.500" rx="5" ry="2.300" stroke="#fff" strokeWidth="2" />
		</>,
	],
	[
		"曲面工具",
		1,
		<>
			<path d="M10 7q7 1 9-3l5 3q-3 5-9 15-5 0-10-3 4-5 5-12z" fill="url(#face)" strokeWidth=".8" />
			<path d="M9 11q6 2 12 0M7 16q6 2 11 0M15 7l-5 14M20 9l-6 12" strokeWidth=".6" />
		</>,
	],
	[
		"组合",
		0,
		<g strokeWidth=".8">
			<path d="M5 9c-2-3 2-5 4-3 0-4 6-3 4 0 3-2 5 2 3 4 3 0 3 4 0 4-1 0-2 1-3 3-2 2-4-1-2-3-3 2-6 1-4-2-4 0-3-3-2-3z" fill="#f5a31c" />
			<path d="M13 15c2-2 4 0 4 1 2-2 5-1 4 2 3 0 4 3 1 4 1 2-2 4-4 2-1 2-4 0-3-2-2 1-5-1-2-3-2-1-1-3 0-4z" fill="#fff" />
		</g>,
	],
	[
		"炸开",
		0,
		<path d="M2.500 25.500V8l5 9 3-12.500 3 10.500L22 5l-5 12 7-3-5.500 6 5 2-5 3.500z" fill="url(#boom)" stroke="#333" strokeWidth=".8" />,
	],
	[
		"修剪",
		0,
		<>
			<path d="M3.500 12.500H15v5H3.500z" fill="#fff" strokeWidth="1.300" />
			<path d="M14.500 15l4-2 4 6-3 3z" fill="#eee" stroke="#555" strokeWidth=".8" />
			<path d="M12 4h7l-5.500 13z" fill="#26408c" stroke="none" />
		</>,
	],
	[
		"分割",
		0,
		<>
			<path d="M4.500 13.500H13v5H4.500zM13 13.500h9.500v5H13z" fill="#fff" strokeWidth="1.300" />
			<path d="M14 5h6l-5 13z" fill="#26408c" stroke="none" />
		</>,
	],
	[
		"群组",
		1,
		<>
			<g fill="#000">
				<circle cx="14" cy="10" r="5" />
				<circle cx="10.500" cy="16" r="5" />
				<circle cx="17.500" cy="16" r="5" />
			</g>
			<circle cx="14" cy="9.500" r="3.600" fill="#a0a4f4" stroke="none" />
			<circle cx="10.500" cy="16" r="3.600" fill="#fff" stroke="none" />
			<circle cx="17.500" cy="16" r="3.600" fill="#1c1a80" stroke="none" />
		</>,
	],
	[
		"解散群组",
		0,
		<>
			<circle cx="14" cy="9.500" r="3.500" fill="#a0a4f4" stroke="#667" />
			<circle cx="9" cy="18" r="3.700" fill="#fff" stroke="#333" />
			<circle cx="19" cy="18" r="3.700" fill="#1c1a80" stroke="#223" />
		</>,
	],
	[
		"编辑点",
		0,
		<>
			<path d="M4 11q4-3 8-1 8 3 8 14" strokeWidth="1.600" />
			<Sq at={[[9, 9], [19, 18.5]]} />
		</>,
	],
	[
		"控制点",
		1,
		<>
			<path d="M4 9c10-1 16 6 16 15" strokeWidth="1.600" />
			<path d="M3 5h8l12 12v8" strokeDasharray="1.500 1.500" />
			<Sq at={[[11, 5], [23, 16]]} />
		</>,
	],
	[
		"文字",
		0,
		<path d="M5.500 4.500l16 1.500.5 5h-2.500L18 9l-1 12 2 1v1.500l-8-.5v-1.500l2-.5V8L8.500 8 7.500 10.500h-2z" fill="#5b78f0" strokeWidth=".8" />,
	],
	[
		"移动",
		1,
		<>
			<path d="M17.500 4.500h6v6h-6z" fill="#8ea2ff" />
			<path d="M5.500 17.500h6v6h-6z" fill="url(#paper)" />
			<path d="M11.500 17l5.500-5M13.500 11.500h4v4" />
		</>,
	],
	[
		"复制",
		0,
		<>
			<path d="M16.500 7.500h6v6h-6z" fill="#8ea2ff" />
			<path d="M12.500 10.500h6v6h-6zM5.500 4.500h6v6h-6zM16.500 18.500h6v5.500h-6z" fill="#8ea2ff" />
			<path d="M5.500 17.500h6v5.500h-6z" fill="#fff" />
		</>,
	],
	[
		"旋转",
		0,
		<>
			<path d="M3.500 5.500H8v13H3.500z" fill="#fff" />
			<path d="M11.500 21L20 11l4 3-8.500 9.500z" fill="#8ea2ff" />
			<path d="M9 8q5-1 8 3M17.500 7v4h-4" />
		</>,
	],
	[
		"实体工具",
		1,
		<g strokeWidth=".8" stroke="#1a2450">
			<path d="M4.500 9l9-5 10 3v12l-9.500 5-9.500-4z" fill="#6f8cf5" />
			<path d="M4.500 9l9-5 10 3-9 5z" fill="#a8baff" />
			<path d="M14.500 12v12l9-5V7z" fill="#5676ec" />
			<path d="M10.500 18l6-2.500 3 1.500v4l-5 3-4-2z" fill="#fff" />
		</g>,
	],
	[
		"挤出",
		1,
		<>
			<path d="M8.500 17.500H25l-5 5H4z" fill="#86a6ff" stroke="#26408c" strokeWidth=".8" />
			<path d="M8.500 19V9M14.500 19V9M20.500 19V9" stroke="#fff" strokeWidth="1.600" />
			<path d="M6 10.500L8.500 6l2.500 4.500zM12 10.500L14.500 6l2.500 4.500zM18 10.500L20.500 6l2.500 4.500z" fill="#fff" stroke="none" />
		</>,
	],
	[
		"阵列",
		1,
		[0, 1, 2].map((r) =>
			[0, 1, 2].map((c) => (
				<rect key={`${r}${c}`} x={4.5 + c * 7} y={4.5 + r * 7} width="4" height="4" fill={r === 2 && c === 0 ? "#fff" : "#8ea2ff"} />
			)),
		),
	],
	["更多", 0, <path d="M16 11l3 3-3 3M20.500 11l3 3-3 3" strokeWidth="1.300" />],
];

const panelTabs = [
	["属性", <Wheel r={6.5} />],
	["图层", <Layers />],
	[
		"渲染",
		<>
			<circle cx="12" cy="16" r="7.500" fill="url(#blueball)" strokeWidth=".6" />
			<path d="M12 9l4-4 8-1.500v4L18 10l-2 2z" fill="#aaa" strokeWidth=".8" />
		</>,
	],
	[
		"材质",
		<g strokeWidth=".8">
			<path d="M5 23l3-7 4 1 1 3-4 3z" fill="#c05a2a" />
			<path d="M9 15l5-5 4 3-5 6z" fill="#fff" />
			<path d="M14 10l4-4.500q4-1 4 3L18 13z" fill="#d07a54" />
		</g>,
	],
	["图库", <Folder />],
	[
		"说明",
		<>
			<path d="M5.500 5.500h17v17h-17z" fill="#fff" stroke="#223a9a" />
			<path d="M6 6h16v2.500H6z" fill="#b8c4ee" stroke="none" />
			<path d="M7.500 9.500h13v12h-13z" fill="#4464d8" stroke="none" />
			<path d="M11 13c0-4 6-3 5.500 0-.5 2-2.500 2-2.500 4M14 18.500V20" stroke="#fff" strokeWidth="1.600" />
		</>,
	],
];

const menus = [
	["文件", "(F)"],
	["编辑", "(E)"],
	["查看", "(V)"],
	["曲线", "(C)"],
	["曲面", "(S)"],
	["实体", "(O)"],
	["网格", "(M)"],
	["尺寸标注", "(D)"],
	["变动", "(T)"],
	["工具", "(L)"],
	["分析", "(A)"],
	["渲染", "(R)"],
	["面板", "(P)"],
	["", "V-Ray"],
	["说明", "(H)"],
];

const toolTabs = [
	["工作平面", 92],
	["设置视图", 91],
	["显示", 63],
	["选取", 63],
	["工作视窗配置", 119],
	["可见性", 76],
	["变动", 64],
	["曲线工具", 91],
	["曲面工具", 91],
	["实体工具", 91],
	["网格工具", 91],
	["渲染工具", 91],
	["出图", 63],
	["V6 的新功能", 112],
];

const snaps = ["端点", "最近点", "点", "中点", "中心点", "交点", "垂点", "切点", "四分点", "节点", "顶点"];

const statusCells = [
	{ text: "工作平面", width: 61 },
	{ text: "x 0.709", width: 88 },
	{ text: "y 13.394", width: 88 },
	{ text: "z 0.000", width: 88 },
	{ text: "毫米", width: 88 },
	{ text: "默认值", width: 168, swatch: true },
	{ text: "锁定格点", width: 62 },
	{ text: "正交", width: 38 },
	{ text: "平面模式", width: 62 },
	{ text: "物件锁点", width: 62 },
	{ text: "智慧轨迹", width: 62, bold: true },
	{ text: "操作轴", width: 50 },
	{ text: "记录建构历史", width: 86 },
	{ text: "过滤器", width: 50 },
];

const properties = [
	{
		title: "工作视窗",
		rows: [
			{ label: "标题", value: "Top" },
			{ label: "宽度", value: "577" },
			{ label: "高度", value: "224" },
			{ label: "投影", value: "平行", kind: "select" },
		],
	},
	{
		title: "摄像机",
		rows: [
			{ label: "镜头焦距", value: "50.0", gray: true, disabled: true },
			{ label: "旋转", value: "0.0" },
			{ label: "X 座标", value: "13.994" },
			{ label: "Y 座标", value: "5.269" },
			{ label: "Z 座标", value: "80.212" },
			{ label: "目标点...", value: "80.212", gray: true },
			{ label: "位置", value: "放置...", kind: "button" },
		],
	},
	{
		title: "目标点",
		rows: [
			{ label: "X 座标", value: "13.994" },
			{ label: "Y 座标", value: "5.269" },
		],
	},
];

// flat construction plane: ox, oy is the origin, a major line every five minor ones
const PlaneGrid = ({ ox, oy, step }) => {
	const minor = [];
	const major = [];
	for (let i = -60; i <= 120; i++) {
		const x = Math.round(ox + i * step) + 0.5;
		const y = Math.round(oy - i * step) + 0.5;
		(i % 5 ? minor : major).push(`M${x} 0V1200M0 ${y}H2400`);
	}
	return (
		<svg shapeRendering="crispEdges" fill="none">
			<path d={minor.join("")} stroke="#939aa2" />
			<path d={major.join("")} stroke="#858890" />
			<path d={`M${ox} ${oy}V0`} stroke="#4a9b4a" strokeWidth="2" />
			<path d={`M${ox} ${oy}H2400`} stroke="#9e4a4c" strokeWidth="2" />
		</svg>
	);
};

// ground plane in perspective, from the corners (0,0) (10,0) (10,14) (0,14)
const corners = [
	[288.7, 112],
	[548.3, 186.7],
	[568.7, 48.7],
	[395.7, 19],
];

const PerspectiveGrid = () => {
	const [[x0, y0], [x1, y1], [x2, y2], [x3, y3]] = corners;
	const dx1 = x1 - x2;
	const dx2 = x3 - x2;
	const sx = x0 - x1 + x2 - x3;
	const dy1 = y1 - y2;
	const dy2 = y3 - y2;
	const sy = y0 - y1 + y2 - y3;
	const det = dx1 * dy2 - dx2 * dy1;
	const g = (sx * dy2 - dx2 * sy) / det;
	const h = (dx1 * sy - sx * dy1) / det;
	const depth = (u, v) => g * u + h * v + 1;
	const project = ([u, v]) => {
		const w = depth(u, v);
		const x = ((x1 - x0 + g * x1) * u + (x3 - x0 + h * x3) * v + x0) / w;
		const y = ((y1 - y0 + g * y1) * u + (y3 - y0 + h * y3) * v + y0) / w;
		return `${x.toFixed(1)} ${y.toFixed(1)}`;
	};
	const segment = (a, b) => {
		const near = 0.15;
		const wa = depth(...a);
		const wb = depth(...b);
		if (wa < near && wb < near) return "";
		const cut = (p, q, wp, wq) => {
			const t = (near - wp) / (wq - wp);
			return [p[0] + (q[0] - p[0]) * t, p[1] + (q[1] - p[1]) * t];
		};
		const from = wa < near ? cut(a, b, wa, wb) : a;
		const to = wb < near ? cut(b, a, wb, wa) : b;
		return `M${project(from)}L${project(to)}`;
	};
	const minor = [];
	const major = [];
	for (let i = -70; i <= 70; i++) {
		const list = i % 5 ? minor : major;
		list.push(segment([i / 50, -1], [i / 50, 1]));
		list.push(segment([-1.4, i / 70], [1.4, i / 70]));
	}
	return (
		<svg fill="none">
			<path d={minor.join("")} stroke="#8f959e" strokeWidth=".6" opacity=".7" />
			<path d={major.join("")} stroke="#82858e" />
			<path d={segment([0, 0], [0, 1])} stroke="#4a9b4a" strokeWidth="2" />
			<path d={segment([0, 0], [1.4, 0])} stroke="#9e4a4c" strokeWidth="2" />
		</svg>
	);
};

const FlatGizmo = ({ up, right }) => (
	<Gizmo>
		<path d="M8.500 18v30.500H38" fill="none" stroke="#5c5e62" />
		<text x="10" y="19" fill="#5c5e62">
			{up}
		</text>
		<text x="40" y="50" fill="#5c5e62">
			{right}
		</text>
	</Gizmo>
);

const PerspectiveGizmo = () => (
	<Gizmo>
		<path d="M8.500 21v27.500l26 7M8.500 48.500L22 36" fill="none" stroke="#5c5e62" />
		<g fill="#5c5e62">
			<text x="10" y="23">
				z
			</text>
			<text x="24" y="36">
				y
			</text>
			<text x="37" y="58">
				x
			</text>
		</g>
	</Gizmo>
);

const Viewport = ({ name, active, children }) => (
	<ViewportFrame>
		{children}
		<ViewportLabel $active={active}>
			{name}
			<span />
			<svg width="8" height="5">
				<path d="M0 0h8L4 4.500z" fill="currentColor" />
			</svg>
		</ViewportLabel>
	</ViewportFrame>
);

const Chevron = ({ up, color = "#505050", width = 2 }) => (
	<svg width="10" height="7" fill="none" stroke={color} strokeWidth={width}>
		<path d={up ? "M1.500 5.500L5 2l3.500 3.500" : "M1.500 1.500L5 5l3.500-3.500"} />
	</svg>
);

const Tools = ({ items }) =>
	items.map((item, i) =>
		item ? (
			<ToolButton key={i} aria-label={item[0]}>
				<Icon flag={item[1]}>{item[2]}</Icon>
			</ToolButton>
		) : (
			<Divider key={i} />
		),
	);

const PropValue = ({ row }) => {
	if (row.kind === "select") {
		return (
			<SelectBox>
				<select aria-label={row.label} defaultValue={row.value}>
					<option>{row.value}</option>
				</select>
				<span>
					<Chevron width={1.2} />
				</span>
			</SelectBox>
		);
	}
	if (row.kind === "button") return <button>{row.value}</button>;
	return <input aria-label={row.label} defaultValue={row.value} disabled={row.disabled} />;
};

const PropertiesPanel = () => (
	<Panel>
		<PanelTabs>
			{panelTabs.map(([name, icon], i) => (
				<PanelTab key={name} aria-label={name} $active={i === 0}>
					<Icon size={24}>{icon}</Icon>
				</PanelTab>
			))}
			<PanelOptions aria-label="面板选项">
				<svg width="16" height="16">
					<path d={gearPath(8, 8, 5.5, 7.5, 8)} fill="#bcbcbc" />
					<circle cx="8" cy="8" r="2" fill="#ebecf0" />
				</svg>
			</PanelOptions>
		</PanelTabs>
		<PanelBody>
			<PageButtons>
				<PageButton $active aria-label="视图">
					<svg width="24" height="25">
						<path d="M2 9l5-1 2-3h8l2 3 3 1v10l-2 1H4l-2-2z" fill="#3a3e46" />
						<circle cx="13" cy="14" r="5.500" fill="#8a9098" stroke="#1a1c20" />
						<circle cx="13" cy="14" r="3" fill="#1a2a3a" />
						<path d="M11.500 13l1.500-1.500" stroke="#cfe4f4" />
					</svg>
				</PageButton>
				<PageButton aria-label="显示">
					<svg width="24" height="25" fill="none">
						<path d="M1.500 2.500h21v20h-21z" stroke="#555" strokeWidth="2" />
						<path d="M3.500 4.500h17v16h-17z" stroke="#70c4ec" strokeWidth="2" />
						<path d="M5.500 6.500h13v12h-13z" fill="#fff" stroke="#e02020" />
					</svg>
				</PageButton>
			</PageButtons>
			<PropsScroll>
				<PropTable>
					<colgroup>
						<col />
						<col />
						<col />
					</colgroup>
					{properties.map((group) => (
						<tbody key={group.title}>
							<tr>
								<th scope="rowgroup" colSpan={3}>
									{group.title}
								</th>
							</tr>
							{group.rows.map((row) => (
								<tr key={row.label}>
									<td />
									<th scope="row">{row.disabled ? <Dim>{row.label}</Dim> : row.label}</th>
									<ValueCell $gray={row.gray}>
										{row.disabled ? (
											<Dim>
												<PropValue row={row} />
											</Dim>
										) : (
											<PropValue row={row} />
										)}
									</ValueCell>
								</tr>
							))}
						</tbody>
					))}
				</PropTable>
				<ScrollBar>
					<button aria-label="向上">
						<Chevron up />
					</button>
					<span />
					<button aria-label="向下">
						<Chevron />
					</button>
				</ScrollBar>
			</PropsScroll>
		</PanelBody>
	</Panel>
);

export default function App() {
	return (
		<Desktop>
			<GlobalStyle />
			<SharedPaints />
			<Window>
				<TitleBar>
					<svg width="16" height="16">
						<path d="M0 0h16v16H0z" fill="#222" />
						<path d="M0 3l3 3 2-4 2 4 3 3 4-1-1 5-4 3-5-2-3-4z" fill="#fff" />
						<path d="M14.500 1.500q-3 0-3 3.500h3V3.500h-3" fill="none" stroke="#fff" />
					</svg>
					<span>
						未命名 <Latin>- Rhinoceros 6 å•†ä¸šç‰ˆ</Latin>
					</span>
					<Watermark>www.dgrai.com</Watermark>
					<WindowButtons>
						<button aria-label="最小化">
							<svg width="11" height="11">
								<path d="M0 5.500h10" stroke="#000" />
							</svg>
						</button>
						<button aria-label="最大化">
							<svg width="11" height="11">
								<path d="M.5.5h9v9h-9z" fill="none" stroke="#000" />
							</svg>
						</button>
						<button aria-label="关闭">
							<svg width="11" height="11">
								<path d="M.5.5l10 10M10.500.5l-10 10" stroke="#000" />
							</svg>
						</button>
					</WindowButtons>
				</TitleBar>
				<MenuBar>
					{menus.map(([name, letter]) => (
						<MenuItem key={letter} $hot={letter === "V-Ray"}>
							{name}
							<Latin>{letter}</Latin>
						</MenuItem>
					))}
				</MenuBar>
				<CommandArea>
					<History>
						<p>
							目前的渲染插件程序设置为 <Latin>"V-Ray for Rhino"</Latin>
						</p>
					</History>
					<HistoryScroll>
						<button aria-label="向上滚动">
							<Chevron up />
						</button>
						<button aria-label="向下滚动">
							<Chevron />
						</button>
					</HistoryScroll>
					<Prompt>
						<label htmlFor="command">指令:</label>
						<Caret />
						<input id="command" />
					</Prompt>
					<Spinner>
						<button aria-label="上一条">
							<svg width="6" height="4">
								<path d="M0 4h6L3 0z" />
							</svg>
						</button>
						<button aria-label="下一条">
							<svg width="6" height="4">
								<path d="M0 0h6L3 4z" />
							</svg>
						</button>
					</Spinner>
				</CommandArea>
				<TabStrip>
					<ToolTab $active>标准</ToolTab>
					{toolTabs.map(([name, width]) => (
						<ToolTab key={name} $width={width}>
							{name}
						</ToolTab>
					))}
					<StripOptions aria-label="工具列选项">
						<svg width="14" height="24" viewBox="0 0 14 24" fill="none" stroke="#8c8c8c" strokeWidth="1.200">
							<path d={gearPath(7, 12, 5.5, 6.5, 8)} />
							<circle cx="7" cy="12" r="1.800" />
						</svg>
					</StripOptions>
				</TabStrip>
				<ToolBar $height={35} $line>
					<Tools items={mainTools} />
				</ToolBar>
				<ToolBar $height={48}>
					<Tools items={vrayTools} />
				</ToolBar>
				<Main>
					<SideTools>
						<Tools items={sideTools} />
					</SideTools>
					<Center>
						<ViewportGrid>
							<Viewport name="Top" active>
								<PlaneGrid ox={97} oy={184} step={13.6} />
								<FlatGizmo up="y" right="x" />
							</Viewport>
							<Viewport name="Perspective">
								<PerspectiveGrid />
								<PerspectiveGizmo />
							</Viewport>
							<Viewport name="Front">
								<PlaneGrid ox={288} oy={111} step={7.2} />
								<FlatGizmo up="z" right="x" />
							</Viewport>
							<Viewport name="Right">
								<PlaneGrid ox={288} oy={111} step={7.2} />
								<FlatGizmo up="z" right="y" />
							</Viewport>
						</ViewportGrid>
						<ViewTabs>
							<ViewTab $gray $width={87}>
								Perspective
							</ViewTab>
							<ViewTab $current $width={49}>
								Top
							</ViewTab>
							<ViewTab $gray $width={50}>
								Front
							</ViewTab>
							<ViewTab $gray $width={50}>
								Right
							</ViewTab>
							<ViewTab $width={32} aria-label="新建视图">
								<svg width="11" height="11">
									<path d="M4 1h3v3h3v3H7v3H4V7H1V4h3z" fill="none" stroke="#666" />
								</svg>
							</ViewTab>
						</ViewTabs>
					</Center>
					<PropertiesPanel />
				</Main>
				<SnapBar>
					{snaps.map((name) => (
						<Snap key={name}>
							<input type="checkbox" />
							{name}
						</Snap>
					))}
					<Snap $off>
						<input type="checkbox" disabled />
						投影
					</Snap>
					<Snap $off>
						<input type="checkbox" disabled />
						停用
					</Snap>
				</SnapBar>
				<StatusBar>
					{statusCells.map((cell) => (
						<StatusCell key={cell.text} $width={cell.width} $bold={cell.bold} $left={cell.swatch}>
							{cell.swatch && <i />}
							{cell.text}
						</StatusCell>
					))}
					<StatusCell as="span" $grow />
					<StatusCell as="span" $width={26} />
				</StatusBar>
			</Window>
			<Pointer width="92" height="270" viewBox="756 56 92 270">
				<path d="M761 57L772 71 769 72.500 792 145 814 220 845 321H843.500L808 220 785 145 762 74 757 75z" fill="#fb3b38" />
			</Pointer>
		</Desktop>
	);
}
